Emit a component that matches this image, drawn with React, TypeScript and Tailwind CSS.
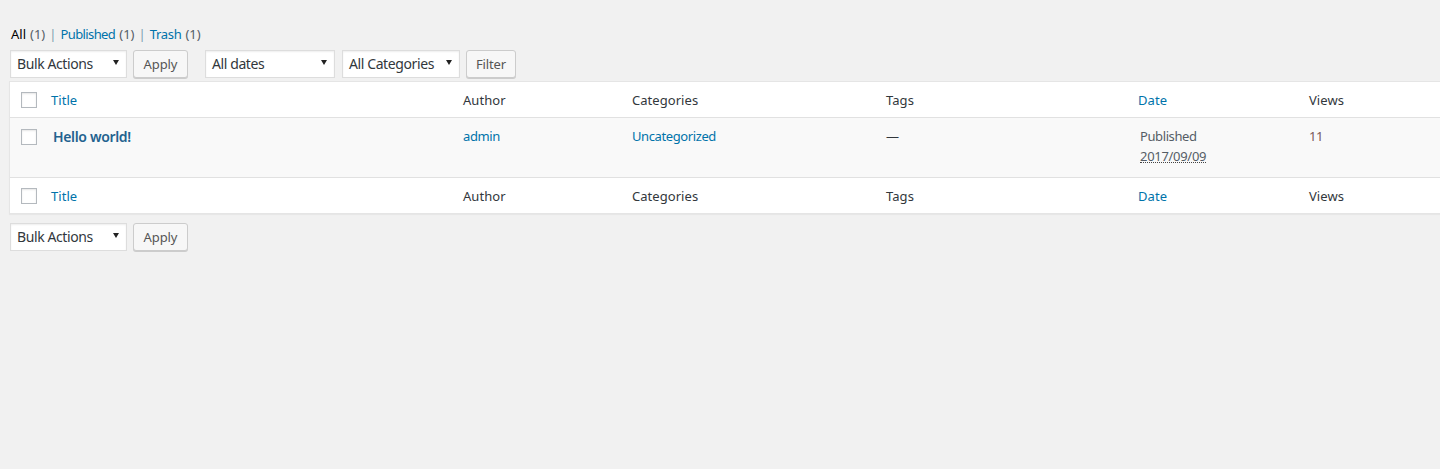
const font = "[font-family:'Noto_Sans',sans-serif]";

function Check() {
  return <span className="block w-4 h-4 border border-[#b4b9be] bg-white shadow-[inset_0_1px_2px_rgba(0,0,0,0.1)]" />;
}

function Select({ label, width }: { label: string; width: string }) {
  return (
    <div className={`${width} h-7 bg-white border border-[#dddddd] shadow-[inset_0_1px_2px_rgba(0,0,0,0.07)] flex items-center justify-between pl-[6px] pr-[7px] pb-[1px] text-[#32373c] text-[14px]`}>
      <span className="tracking-[-0.4px]">{label}</span>
      <svg width="6" height="5" viewBox="0 0 6 5" className="mb-[2px]"><path d="M0 0h6L3 5z" fill="#222" /></svg>
    </div>
  );
}

function Button({ label, width }: { label: string; width: string }) {
  return (
    <button className={`${width} h-7 bg-[#f7f7f7] border border-[#cccccc] rounded-[3px] shadow-[0_1px_0_#cccccc] text-[#555555] text-[13px] tracking-[-0.1px] flex items-center justify-center pt-[2px]`}>
      {label}
    </button>
  );
}

function HeadRow({ border }: { border: "b" | "t" }) {
  return (
    <div className={`flex items-center h-9 pt-[2px] ${border === "b" ? "border-b" : "border-t"} border-[#e1e1e1] bg-white text-[13px] tracking-[0.05px] text-[#32373c]`}>
      <div className="w-[41px] pl-[11px] shrink-0 -mt-[2px]"><Check /></div>
      <div className="w-[412px] shrink-0 text-[#0073aa]">Title</div>
      <div className="w-[169px] shrink-0">Author</div>
      <div className="w-[254px] shrink-0">Categories</div>
      <div className="w-[252px] shrink-0">Tags</div>
      <div className="w-[171px] shrink-0 text-[#0073aa]">Date</div>
      <div className="w-[120px] shrink-0">Views</div>
    </div>
  );
}

export default function App() {
  return (
    <div className={`w-[1440px] h-[469px] overflow-hidden bg-[#f1f1f1] ${font} pl-[10px] pt-[26px]`}>
      <div className="flex h-[18px] items-center text-[13px] pl-px text-[#555d66]">
        <span className="text-black">All</span>
        <span className="ml-[4px]">(1)</span>
        <span className="text-[#7a9db0] ml-[4px] mr-[4px]">|</span>
        <span className="text-[#0073aa] tracking-[-0.6px]">Published</span>
        <span className="ml-[4px]">(1)</span>
        <span className="text-[#7a9db0] ml-[4px] mr-[4px]">|</span>
        <span className="text-[#0073aa] tracking-[-0.3px]">Trash</span>
        <span className="ml-[4px]">(1)</span>
      </div>
      <div className="flex mt-[6px] h-7">
        <Select label="Bulk Actions" width="w-[117px]" />
        <div className="ml-[6px]"><Button label="Apply" width="w-[55px]" /></div>
        <div className="ml-[17px]"><Select label="All dates" width="w-[130px]" /></div>
        <div className="ml-[7px]"><Select label="All Categories" width="w-[118px]" /></div>
        <div className="ml-[6px]"><Button label="Filter" width="w-[50px]" /></div>
      </div>
      <div className="mt-[3px] w-[1500px] border border-[#e5e5e5] border-r-0 shadow-[0_1px_1px_rgba(0,0,0,0.04)] -ml-px">
        <HeadRow border="b" />
        <div className="flex h-[59px] bg-[#f9f9f9] text-[13px] tracking-[-0.4px]">
          <div className="w-[41px] pl-[11px] pt-[11px] shrink-0"><Check /></div>
          <div className="w-[412px] pl-[2px] pt-[8px] shrink-0 font-semibold text-[14px] tracking-[-0.35px] text-[#23628f]">Hello world!</div>
          <div className="w-[169px] pt-[9px] shrink-0 text-[#0073aa]">admin</div>
          <div className="w-[254px] pt-[9px] shrink-0 text-[#0073aa]">Uncategorized</div>
          <div className="w-[252px] pt-[9px] shrink-0 text-[#32373c]">—</div>
          <div className="w-[171px] pl-[2px] pt-[8px] shrink-0 text-[#555d66] leading-[20px]">
            <div>Published</div>
            <div className="w-fit mt-[4px] border-b border-dotted border-[#444] leading-[12px] tracking-[-0.3px]">2017/09/09</div>
          </div>
          <div className="w-[120px] pt-[9px] shrink-0 text-[#7a5a5a]">11</div>
        </div>
        <HeadRow border="t" />
      </div>
      <div className="flex mt-[9px] h-7">
        <Select label="Bulk Actions" width="w-[117px]" />
        <div className="ml-[6px]"><Button label="Apply" width="w-[55px]" /></div>
      </div>
    </div>
  );
}
